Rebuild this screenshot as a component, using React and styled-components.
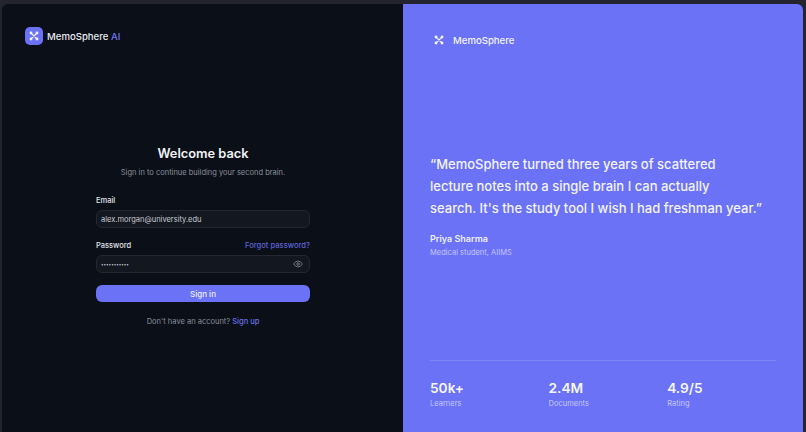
import React from "react";
import styled, { createGlobalStyle } from "styled-components";
import { Eye } from "lucide-react";

const Global = createGlobalStyle`
  html, body { margin: 0; padding: 0; background: #23242f; }
  * { box-sizing: border-box; }
  body { font-family: Inter, "Liberation Sans", sans-serif; -webkit-font-smoothing: antialiased; overflow: hidden; }
`;

const Shell = styled.div`
  width: 806px;
  height: 432px;
  padding: 4px 3px 0 2px;
  display: grid;
  grid-template-columns: 401px 400px;
`;

const LeftPanel = styled.section`
  background: #0a0f18;
  border-top-left-radius: 6px;
  padding: 23px 22px 0 23px;
  display: flex;
  flex-direction: column;
`;

const Brand = styled.div`
  display: flex;
  align-items: center;
  gap: 4px;
  font-size: 9.6px;
  font-weight: 500;
  color: #e8eaf0;
  height: 18px;
`;

const BrandBadge = styled.span`
  width: 18px;
  height: 18px;
  border-radius: 5px;
  background: #6b72f6;
  display: flex;
  align-items: center;
  justify-content: center;
`;

const Accent = styled.span`
  color: #7278f0;
`;

const Form = styled.div`
  width: 214px;
  margin: 100px 0 0 71px;
  display: flex;
  flex-direction: column;
`;

const Title = styled.h1`
  margin: 0;
  text-align: center;
  font-size: 12.8px;
  line-height: 18px;
  font-weight: 600;
  color: #f1f2f6;
`;

const Subtitle = styled.p`
  margin: 4px 0 0;
  text-align: center;
  font-size: 7.5px;
  line-height: 12px;
  color: #8b909c;
`;

const FieldHead = styled.div`
  display: flex;
  justify-content: space-between;
  align-items: center;
  height: 12px;
  margin-top: ${(p) => p.$top}px;
`;

const Label = styled.span`
  font-size: 7.5px;
  font-weight: 500;
  color: #e2e4ea;
`;

const Forgot = styled.span`
  font-size: 7.6px;
  font-weight: 500;
  color: #5f64d8;
`;

const InputBox = styled.div`
  margin-top: 4px;
  height: 18px;
  border-radius: 6px;
  border: 1px solid #232732;
  background: #13171f;
  display: flex;
  align-items: center;
  justify-content: space-between;
  padding: 0 6px 0 4px;
  font-size: 7.5px;
  color: #c9ccd4;
`;

const Dots = styled.span`
  font-size: 4.5px;
`;

const EyeIcon = styled(Eye)`
  width: 10px;
  height: 10px;
  color: #7d8390;
`;

const Submit = styled.button`
  margin-top: 12px;
  height: 17px;
  border: 0;
  border-radius: 6px;
  background: #6b72f6;
  color: #eceeff;
  font: 500 8px Inter, "Liberation Sans", sans-serif;
`;

const Footer = styled.p`
  margin: 14px 0 0;
  text-align: center;
  font-size: 7.5px;
  line-height: 12px;
  color: #8b909c;
`;

const SignUp = styled.span`
  color: #6a6fe6;
  font-weight: 500;
`;

const RightPanel = styled.section`
  background: #6b72f6;
  border-top-right-radius: 6px;
  padding: 29px 27px 0 27px;
  display: flex;
  flex-direction: column;
  color: #fff;
`;

const RightBrand = styled.div`
  display: flex;
  align-items: center;
  gap: 9px;
  height: 14px;
  margin-left: 4px;
  font-size: 9.6px;
  font-weight: 500;
  color: #f2f3ff;
`;

const Quote = styled.blockquote`
  margin: 106px 0 0;
  font-size: 13px;
  line-height: 22px;
  font-weight: 500;
  color: #f3f4ff;
  white-space: pre-line;
`;

const Author = styled.div`
  margin-top: 14px;
  font-size: 9px;
  line-height: 12px;
  font-weight: 600;
  color: #eef0ff;
`;

const Role = styled.div`
  margin-top: 2px;
  font-size: 7.5px;
  line-height: 11px;
  color: #c4c7fc;
`;

const Stats = styled.div`
  margin-top: 102px;
  border-top: 1px solid #7f86f8;
  padding-top: 19px;
  display: grid;
  grid-template-columns: repeat(3, 118.6px);
`;

const StatValue = styled.div`
  font-size: 13.7px;
  line-height: 17px;
  font-weight: 600;
  color: #f5f6ff;
`;

const StatLabel = styled.div`
  margin-top: 1px;
  font-size: 7.5px;
  line-height: 11px;
  color: #c4c7fc;
`;

const Logo = ({ size }) => (
  <svg width={size} height={size} viewBox="0 0 14 14" fill="none" stroke="#f2f3ff" strokeWidth="1.5" strokeLinecap="round">
    <path d="M3.5 3.5 10.5 10.5M10.5 3.5 3.5 10.5" />
    <circle cx="2.8" cy="2.8" r="2" fill="#f2f3ff" stroke="none" />
    <circle cx="11.2" cy="2.8" r="2" fill="#f2f3ff" stroke="none" />
    <circle cx="2.8" cy="11.2" r="2" fill="#f2f3ff" stroke="none" />
    <circle cx="11.2" cy="11.2" r="2" fill="#f2f3ff" stroke="none" />
  </svg>
);

const stats = [
  ["50k+", "Learners"],
  ["2.4M", "Documents"],
  ["4.9/5", "Rating"],
];

export default function App() {
  return (
    <Shell>
      <Global />
      <LeftPanel>
        <Brand>
          <BrandBadge><Logo size={10} /></BrandBadge>
          <span>MemoSphere <Accent>AI</Accent></span>
        </Brand>
        <Form>
          <Title>Welcome back</Title>
          <Subtitle>Sign in to continue building your second brain.</Subtitle>
          <FieldHead $top={15}><Label>Email</Label></FieldHead>
          <InputBox>alex.morgan@university.edu</InputBox>
          <FieldHead $top={11}><Label>Password</Label><Forgot>Forgot password?</Forgot></FieldHead>
          <InputBox><Dots>•••••••••••</Dots><EyeIcon /></InputBox>
          <Submit>Sign in</Submit>
          <Footer>Don't have an account? <SignUp>Sign up</SignUp></Footer>
        </Form>
      </LeftPanel>
      <RightPanel>
        <RightBrand><Logo size={10} /><span>MemoSphere</span></RightBrand>
        <Quote>{"“MemoSphere turned three years of scattered\nlecture notes into a single brain I can actually\nsearch. It's the study tool I wish I had freshman year.”"}</Quote>
        <Author>Priya Sharma</Author>
        <Role>Medical student, AIIMS</Role>
        <Stats>
          {stats.map(([v, l]) => (
            <div key={l}>
              <StatValue>{v}</StatValue>
              <StatLabel>{l}</StatLabel>
            </div>
          ))}
        </Stats>
      </RightPanel>
    </Shell>
  );
}
